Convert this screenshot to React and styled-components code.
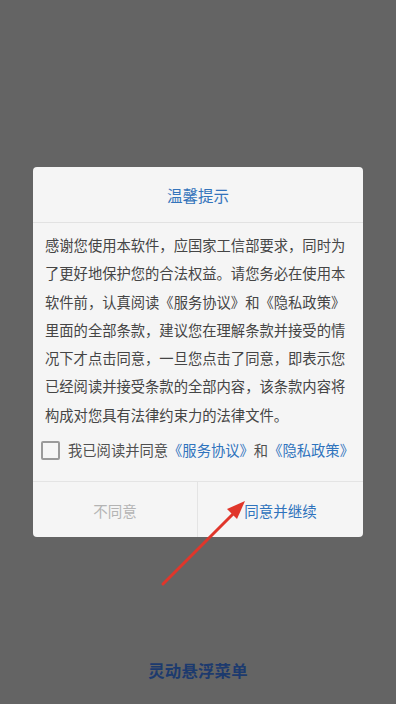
import React from "react";
import styled, { createGlobalStyle } from "styled-components";

const Global = createGlobalStyle`
  html, body { margin: 0; padding: 0; }
  body {
    background: #646464;
    font-family: "Noto Sans CJK SC", "Noto Sans", sans-serif;
  }
`;

const Screen = styled.div`
  position: relative;
  width: 396px;
  height: 704px;
  overflow: hidden;
  display: flex;
  flex-direction: column;
  align-items: center;
  background: #646464;
`;

const Dialog = styled.div`
  margin-top: 167px;
  width: 330px;
  background: #f5f5f5;
  border-radius: 4px;
  display: flex;
  flex-direction: column;
  overflow: hidden;
`;

const Header = styled.div`
  height: 55px;
  display: flex;
  align-items: center;
  justify-content: center;
  border-bottom: 1px solid #e2e2e2;
  color: #3474bb;
  font-size: 15.5px;
`;

const Body = styled.div`
  padding: 8px 12px 0 12px;
  color: #454545;
  font-size: 14.3px;
  line-height: 28.3px;
`;

const AgreeRow = styled.label`
  display: flex;
  align-items: center;
  gap: 8px;
  padding: 11px 0 21px 8px;
  color: #505050;
  font-size: 14.3px;
  line-height: 20px;
`;

const Box = styled.span`
  width: 15px;
  height: 15px;
  border: 2px solid #9a9a9a;
  border-radius: 2px;
  flex: none;
`;

const Link = styled.span`
  color: #2f73bd;
`;

const Footer = styled.div`
  display: grid;
  grid-template-columns: 164px 1fr;
  height: 55px;
  border-top: 1px solid #e4e4e4;
`;

const FooterButton = styled.div`
  display: flex;
  align-items: center;
  justify-content: center;
  font-size: 14.5px;
  color: ${(p) => (p.$primary ? "#2f73bd" : "#b4b4b4")};
  border-left: ${(p) => (p.$primary ? "1px solid #e4e4e4" : "none")};
  padding-top: 2px;
`;

const BottomTitle = styled.div`
  margin-top: 121px;
  color: #1c3a6e;
  font-size: 16.4px;
  font-weight: bold;
  letter-spacing: 0.2px;
`;

const Arrow = styled.svg`
  position: absolute;
  left: 0;
  top: 0;
  pointer-events: none;
`;

export default function App() {
  return (
    <Screen>
      <Global />
      <Dialog>
        <Header>温馨提示</Header>
        <Body>
          感谢您使用本软件，应国家工信部要求，同时为了更好地保护您的合法权益。请您务必在使用本软件前，认真阅读《服务协议》和《隐私政策》里面的全部条款，建议您在理解条款并接受的情况下才点击同意，一旦您点击了同意，即表示您已经阅读并接受条款的全部内容，该条款内容将构成对您具有法律约束力的法律文件。
        </Body>
        <AgreeRow>
          <Box />
          <span>
            我已阅读并同意<Link>《服务协议》</Link>和<Link>《隐私政策》</Link>
          </span>
        </AgreeRow>
        <Footer>
          <FooterButton>不同意</FooterButton>
          <FooterButton $primary>同意并继续</FooterButton>
        </Footer>
      </Dialog>
      <BottomTitle>灵动悬浮菜单</BottomTitle>
      <Arrow width="396" height="704" viewBox="0 0 396 704">
        <line x1="163" y1="584" x2="235" y2="512" stroke="#e0362b" strokeWidth="3" strokeLinecap="round" />
        <polygon points="245,501 227,509 237,519" fill="#e0362b" />
      </Arrow>
    </Screen>
  );
}
